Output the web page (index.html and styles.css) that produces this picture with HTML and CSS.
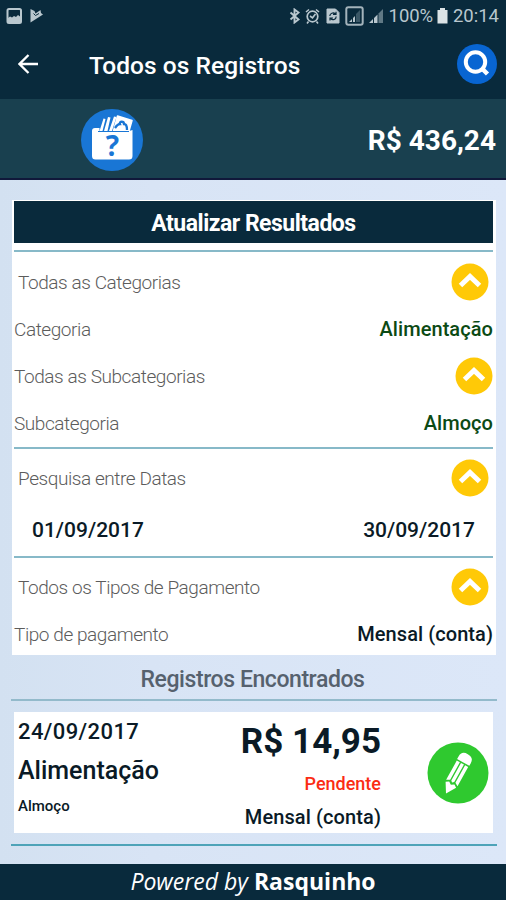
FILE: index.html
```html
<!DOCTYPE html>
<html lang="pt-BR">
<head>
    <meta charset="utf-8">
    <title>Todos os Registros</title>
    <link rel="stylesheet" href="styles.css">
</head>
<body>
    <div class="status-bar">
        <div class="status-left">
            <svg width="16" height="16" viewBox="0 0 16 16">
                <rect x="1.500" y="1" width="13.500" height="14" rx="1.500" fill="none" stroke="#b9c7ce" stroke-width="2"/>
                <path d="M2 10l2-1.500 2 1 2-1.500 2 1 2-2 2 1.500V15H2z" fill="#b9c7ce"/>
            </svg>
            <svg width="14" height="16" viewBox="0 0 14 16">
                <path d="M.5 1l4 2 1 2.500 5-3.500 .5 3 2 1.500L.5 14.500z" fill="#b9c7ce"/>
                <path d="M3.500 5.500l2 2L9 5.500" fill="none" stroke="#092a3c" stroke-width="1"/>
            </svg>
        </div>
        <div class="status-right">
            <svg width="12" height="16" viewBox="0 0 12 16">
                <path d="M1.500 4.500l8 7L5.500 14.500V1.500l4 3-8 7" fill="none" stroke="#b9c7ce" stroke-width="1.900"/>
            </svg>
            <svg class="alarm" width="15" height="16" viewBox="0 0 15 16">
                <circle cx="7.500" cy="8.500" r="5.300" fill="none" stroke="#b9c7ce" stroke-width="1.700"/>
                <path d="M1 4l3-2.500M14 4l-3-2.500M3.500 13.500L2 15.500M11.500 13.500l1.500 2M5 8l2.500 1.800L10.500 6" fill="none" stroke="#b9c7ce" stroke-width="1.600"/>
            </svg>
            <svg class="sim" width="14" height="16" viewBox="0 0 14 16">
                <path d="M1 1h8.500L13 4.500V15H1z" fill="#b9c7ce" stroke="#b9c7ce" stroke-linejoin="round"/>
                <path d="M3.800 8a3.200 3.200 0 0 1 5.500-2M10.200 8.500a3.200 3.200 0 0 1-5.500 2.200M7 6.300h3V3.800M7 10H4v2.500" fill="none" stroke="#092a3c" stroke-width="1.200"/>
            </svg>
            <svg class="signal-box" width="19" height="20" viewBox="0 0 19 20">
                <rect x="1.300" y="1.300" width="16.400" height="17.400" rx="2" fill="none" stroke="#a3b3bb" stroke-width="2"/>
                <path d="M15 4v12h-4V8z" fill="#3a5766"/>
                <path d="M4 16l3-3v3zM8 12l2-2v6H8z" fill="#b9c7ce"/>
            </svg>
            <svg class="signal" width="16" height="16" viewBox="0 0 16 16">
                <path d="M1 15l4-4v4zM6 10l3.500-3.500V15H6z" fill="#b9c7ce"/>
                <path d="M10.500 5.500L15 1v14h-4.500z" fill="#607985"/>
            </svg>
            <span class="percent">100%</span>
            <svg class="battery" width="11" height="16" viewBox="0 0 11 16">
                <path d="M3 0h5v2h2.500v13.500H.5V2H3z" fill="#dbe3e6"/>
            </svg>
            <span class="clock">20:14</span>
        </div>
    </div>

    <div class="toolbar">
        <svg class="back" width="20" height="20" viewBox="0 0 20 20">
            <path d="M10.500 1L1.500 10l9 9M1.500 10H20" fill="none" stroke="#fff" stroke-width="2.300"/>
        </svg>
        <h1>Todos os Registros</h1>
        <svg class="search" width="40" height="40" viewBox="0 0 40 40">
            <circle cx="20" cy="20" r="20" fill="#0865d2"/>
            <circle cx="18.500" cy="18" r="9.700" fill="none" stroke="#fff" stroke-width="4"/>
            <path d="M25 24.500l5.500 5.500" stroke="#fff" stroke-width="4.500"/>
        </svg>
    </div>

    <div class="total">
        <svg class="wallet" width="62" height="62" viewBox="0 0 62 62">
            <circle cx="31" cy="31" r="31" fill="#1976d5"/>
            <path d="M18.500 22l4-12.500 2 .5L21.500 22zM23 22l4-14 2.500 .5L26.500 22zM28 22l5-14.500 2.500 .5L31 22z" fill="#fff"/>
            <path d="M32.500 22l4-15 14.500 4.500L48 22z" fill="#fff" stroke="#fff" stroke-width="1.500" stroke-linejoin="round"/>
            <path d="M34 19c2-3 3-4 5-4-1-3 4-3 4 0 2 0 3 2 3 6" fill="none" stroke="#1976d5" stroke-width="2.300"/>
            <path d="M11 22q0-3 3-3h4.500v3H48l3.500-1v26q0 3.500-3.500 3.500H14.500q-3.500 0-3.500-3.500z" fill="#fff"/>
            <path d="M17 22.500h31" stroke="#1976d5" stroke-width="1"/>
            <text class="wallet-mark" x="31.500" y="46.500" text-anchor="middle">?</text>
        </svg>
        <span class="total-value">R$ 436,24</span>
    </div>

    <div class="content">
        <div class="filters">
            <div class="update">Atualizar Resultados</div>
            <div class="group">
                <div class="row indent">
                    <span class="label">Todas as Categorias</span>
                    <svg class="up" width="38" height="38" viewBox="0 0 38 38"><circle cx="19" cy="19" r="18.500"/><path d="M9.500 22.500l9.500-9 9.500 9"/></svg>
                </div>
                <div class="row">
                    <span class="label">Categoria</span>
                    <span class="value green">Alimentação</span>
                </div>
                <div class="row">
                    <span class="label">Todas as Subcategorias</span>
                    <svg class="up" width="38" height="38" viewBox="0 0 38 38"><circle cx="19" cy="19" r="18.500"/><path d="M9.500 22.500l9.500-9 9.500 9"/></svg>
                </div>
                <div class="row">
                    <span class="label">Subcategoria</span>
                    <span class="value green">Almoço</span>
                </div>
            </div>
            <div class="group">
                <div class="row indent">
                    <span class="label">Pesquisa entre Datas</span>
                    <svg class="up" width="38" height="38" viewBox="0 0 38 38"><circle cx="19" cy="19" r="18.500"/><path d="M9.500 22.500l9.500-9 9.500 9"/></svg>
                </div>
                <div class="row dates">
                    <span>01/09/2017</span>
                    <span>30/09/2017</span>
                </div>
            </div>
            <div class="group">
                <div class="row indent">
                    <span class="label">Todos os Tipos de Pagamento</span>
                    <svg class="up" width="38" height="38" viewBox="0 0 38 38"><circle cx="19" cy="19" r="18.500"/><path d="M9.500 22.500l9.500-9 9.500 9"/></svg>
                </div>
                <div class="row">
                    <span class="label">Tipo de pagamento</span>
                    <span class="value">Mensal (conta)</span>
                </div>
            </div>
        </div>

        <h2>Registros Encontrados</h2>

        <div class="record">
            <div class="record-left">
                <span class="date">24/09/2017</span>
                <span class="category">Alimentação</span>
                <span class="sub">Almoço</span>
            </div>
            <div class="record-right">
                <span class="price">R$ 14,95</span>
                <span class="pending">Pendente</span>
                <span class="payment">Mensal (conta)</span>
            </div>
            <svg class="edit" width="62" height="62" viewBox="0 0 62 62">
                <circle cx="31" cy="31" r="30.500" fill="#2fc92f"/>
                <g transform="translate(19 51.500) rotate(29)">
                    <path d="M0 0l-6-10 3-2 3 2 3-2 3 2z" fill="#fff"/>
                    <path d="M-6.500-12v-22h3.500v20zM-1.700-14v-20h3.400v20L0-12.500zM6.500-12v-22H3v20z" fill="#fff"/>
                    <path d="M-7-35.500v-3q0-6.500 7-6.500t7 6.500v3z" fill="#fff"/>
                </g>
            </svg>
        </div>
        <div class="line"></div>
    </div>

    <div class="footer"><em>Powered by</em> <strong>Rasquinho</strong></div>
</body>
</html>
```
FILE: styles.css
```css
body {
    display: flex;
    flex-direction: column;
    height: 900px;
    margin: 0;
    background-color: #d9e5f5;
    font-family: Roboto, sans-serif;
    color: #0a1a26;
    overflow: hidden;
}

span, h1, h2 {
    white-space: nowrap;
}

.status-bar {
    display: flex;
    justify-content: space-between;
    align-items: center;
    box-sizing: border-box;
    height: 32px;
    padding: 0 7px 0 6px;
    background: #092a3c;
    color: #b9c7ce;
    font-size: 18.5px;
}

.status-left, .status-right {
    display: flex;
    align-items: center;
}

.status-left {
    gap: 8px;
}

.alarm {
    margin-left: 4px;
}

.sim {
    margin-left: 6px;
}

.signal-box {
    margin-left: 5px;
}

.signal {
    margin-left: 4px;
}

.percent {
    margin-left: 5px;
    letter-spacing: -0.1px;
}

.battery {
    margin: 0 5px 0 4px;
}

.toolbar {
    display: flex;
    align-items: center;
    box-sizing: border-box;
    height: 67px;
    padding: 0 9px 3px 18px;
    background: #092a3c;
}

.toolbar h1 {
    flex: 1;
    margin: 3px 0 0 51px;
    color: #fff;
    font-size: 24.5px;
    font-weight: 500;
    letter-spacing: 0.05px;
}

.total {
    display: flex;
    justify-content: space-between;
    align-items: center;
    box-sizing: border-box;
    height: 81px;
    padding: 2px 10px 0 81px;
    border-bottom: 2px solid #10183a;
    background: #19404f;
}

.wallet-mark {
    fill: #1976d5;
    font-family: "Open Sans", sans-serif;
    font-size: 28px;
    font-weight: 700;
}

.total-value {
    padding-top: 1px;
    color: #fff;
    font-size: 28px;
    font-weight: 700;
}

.content {
    flex: 1;
    padding: 20px 9px 0 11px;
    background: linear-gradient(90deg, #d3e1f1, #d8e4f5 30%, #dce7f8);
}

.filters {
    box-sizing: border-box;
    height: 455px;
    padding: 1px 3px 0 2px;
    margin-left: 1px;
    margin-right: 1px;
    background: #fff;
}

.update {
    height: 42px;
    margin-bottom: 7px;
    background: #092a3c;
    color: #fff;
    font-size: 23px;
    font-weight: 700;
    letter-spacing: -0.5px;
    line-height: 46px;
    text-align: center;
}

.group {
    padding: 6px 0 1px;
    border-top: 2px solid #87b9c8;
}

.group + .group {
    padding: 5px 0 0;
}

.row {
    display: flex;
    justify-content: space-between;
    align-items: center;
    height: 47px;
}

.indent {
    padding: 0 4px;
}

.label {
    padding-top: 1px;
    color: #5c5c5c;
    font-size: 19px;
    font-weight: 300;
    letter-spacing: -0.43px;
}

.value {
    padding-top: 1px;
    font-size: 20px;
    font-weight: 500;
    letter-spacing: 0.07px;
}

.green {
    color: #0b4a14;
}

.up circle {
    fill: #ffc907;
}

.up path {
    fill: none;
    stroke: #fff;
    stroke-width: 5px;
}

.dates {
    height: 55px;
    padding: 2px 18px 0;
    box-sizing: border-box;
    font-size: 21px;
    font-weight: 500;
}

h2 {
    height: 44px;
    margin: 0;
    border-bottom: 2px solid #93bacb;
    color: #56616e;
    font-size: 23px;
    font-weight: 500;
    letter-spacing: -0.43px;
    line-height: 49px;
    text-align: center;
    text-indent: -3px;
}

.record {
    display: flex;
    align-items: center;
    box-sizing: border-box;
    height: 121px;
    margin: 11px 4px 0 3px;
    padding: 0 4px;
    background: #fff;
}

.record-left, .record-right {
    display: flex;
    flex-direction: column;
}

.record-left {
    width: 180px;
    padding-bottom: 11px;
}

.record-right {
    width: 183px;
    margin-right: 46px;
    padding-top: 5px;
    align-items: flex-end;
}

.date {
    font-size: 22px;
    font-weight: 500;
    letter-spacing: 0.4px;
    line-height: 40px;
}

.category {
    font-size: 25px;
    font-weight: 500;
    line-height: 38px;
}

.sub {
    font-size: 15px;
    font-weight: 500;
    line-height: 32px;
}

.price {
    font-size: 35px;
    font-weight: 700;
    line-height: 48px;
}

.pending {
    color: #fb2c14;
    font-size: 18px;
    font-weight: 500;
    line-height: 36px;
}

.payment {
    font-size: 20px;
    font-weight: 500;
    letter-spacing: 0.1px;
    line-height: 30px;
}

.line {
    height: 2px;
    margin-top: 11px;
    background: #4ea3b8;
}

.footer {
    height: 36px;
    background: #092a3c;
    color: #fff;
    font-family: "Open Sans", sans-serif;
    font-size: 23px;
    line-height: 35px;
    text-align: center;
}

.footer em {
    font-weight: 500;
}
```
